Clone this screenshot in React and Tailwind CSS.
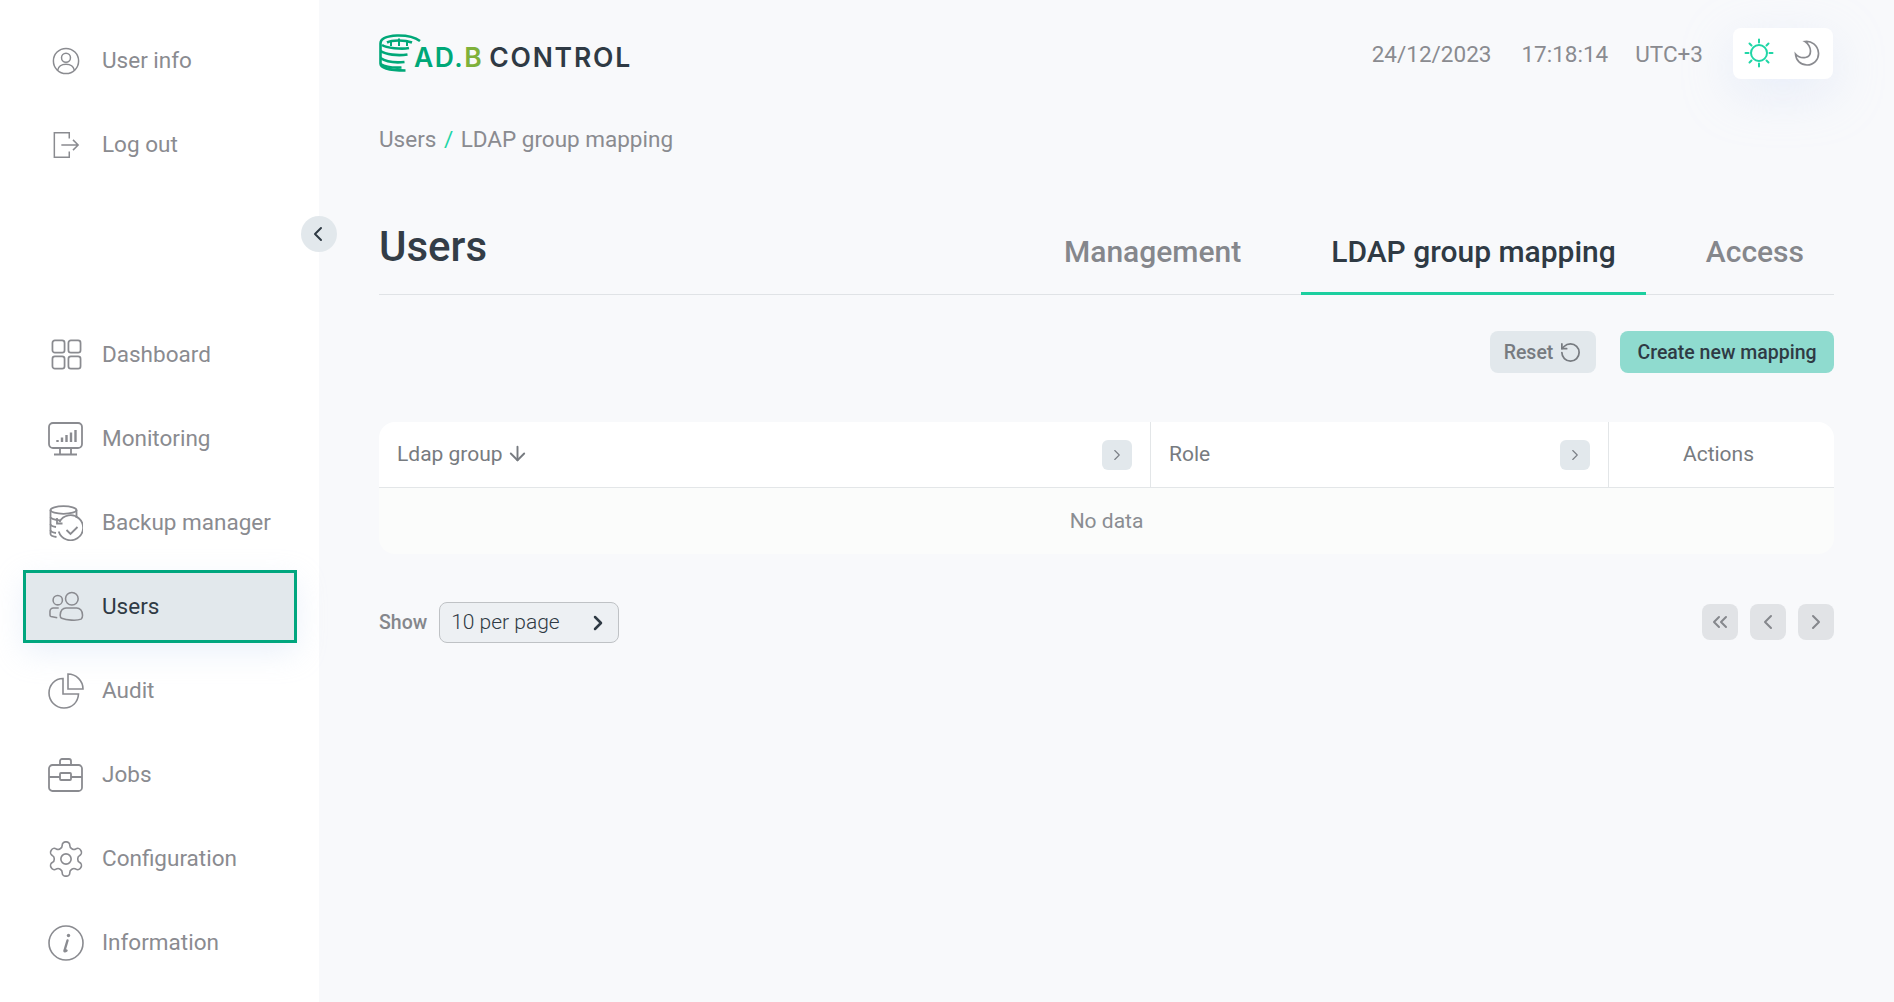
import React from 'react';
import { ChevronLeft, ChevronRight, ChevronsLeft, ArrowDown, RotateCcw } from 'lucide-react';

const IconUser = () => (
  <svg viewBox="0 0 30 30" className="w-[28px] h-[28px]" fill="none" stroke="currentColor" strokeWidth="1.600">
    <circle cx="15" cy="15" r="13.500" />
    <circle cx="15" cy="11.500" r="4.800" />
    <path d="M6 25c1-4.500 4.500-6.500 9-6.500s8 2 9 6.500" />
  </svg>
);

const IconLogout = () => (
  <svg viewBox="0 0 30 30" className="w-[28px] h-[28px]" fill="none" stroke="currentColor" strokeWidth="1.600">
    <path d="M18.500 8V2H2.500v26h16v-6" />
    <path d="M10 15h18M22.500 9.500 28 15l-5.500 5.500" />
  </svg>
);

const IconDashboard = () => (
  <svg viewBox="0 0 32 32" className="w-[31px] h-[31px]" fill="none" stroke="currentColor" strokeWidth="1.800">
    <rect x="1.500" y="1.500" width="12.500" height="12.500" rx="2.500" />
    <rect x="18" y="1.500" width="12.500" height="12.500" rx="2.500" />
    <rect x="1.500" y="18" width="12.500" height="12.500" rx="2.500" />
    <rect x="18" y="18" width="12.500" height="12.500" rx="2.500" />
  </svg>
);

const IconMonitor = () => (
  <svg viewBox="0 0 36 34" className="w-9 h-[34px]" fill="none" stroke="currentColor" strokeWidth="1.800">
    <rect x="1" y="1" width="33" height="25" rx="4" />
    <path d="M12 26v6M23 26v6M6 32.500h23" />
    <path d="M9.500 20v-2M14 20v-4.500M18.500 20v-7M23 20v-9.500M27.500 20V8" strokeWidth="2.400" />
  </svg>
);

const IconBackup = () => (
  <svg viewBox="0 0 34 36" className="w-[34px] h-9" fill="none" stroke="currentColor" strokeWidth="1.800">
    <ellipse cx="14.500" cy="5" rx="13" ry="3.800" />
    <path d="M1.500 5v24c0 1.500 2.500 2.500 6 3M27.500 5v8" />
    <path d="M1.500 12c0 1.500 4 3 10 3.500M1.500 19c0 1.500 2.500 2.500 5.500 3M1.500 25c0 1.500 2.500 2.500 5.500 3" />
    <path d="M10.500 17a12.500 12.500 0 1 1-.8 9.500" />
    <path d="M8 13v5.500h5.500" />
    <path d="m17.500 25 4 4 7-7" />
  </svg>
);

const IconUsers = () => (
  <svg viewBox="0 0 36 32" className="w-[35px] h-8" fill="none" stroke="currentColor" strokeWidth="1.600">
    <circle cx="9" cy="9" r="4.800" />
    <circle cx="23.500" cy="7.500" r="6.500" />
    <path d="M10 17H4.500C2.500 17 1 18.500 1 20.500v4c0 .5.500 1 1 1.200l6.500 1.300" />
    <path d="M13 27.500c-1.500-.5-1.500-1.500-1.500-3 0-5 3-7.500 6-7.500h11c3 0 6 2.500 6 7.500 0 2 0 3-1.500 4-5 2-15 1-20-1Z" />
  </svg>
);

const IconAudit = () => (
  <svg viewBox="0 0 36 36" className="w-9 h-9" fill="none" stroke="currentColor" strokeWidth="1.600">
    <path d="M15 5.500C7 5.500 1 12 1 20c0 8 6.500 15 15 15s14-6 14.500-14H15Z" />
    <path d="M20 1c8 0 15 6.500 15 15H20Z" />
  </svg>
);

const IconJobs = () => (
  <svg viewBox="0 0 36 34" className="w-9 h-[34px]" fill="none" stroke="currentColor" strokeWidth="1.800">
    <rect x="1" y="7" width="33" height="26" rx="3.500" />
    <path d="M12 7V3c0-1 1-2 2-2h7c1 0 2 1 2 2v4" />
    <path d="M1 19h11M23 19h11" />
    <rect x="12" y="15" width="11" height="7" rx="1" />
  </svg>
);

const IconGear = () => (
  <svg viewBox="1.500 1.500 21 21" className="w-9 h-9" fill="none" stroke="currentColor" strokeWidth="0.950" strokeLinejoin="round">
    <path d="M12.220 2h-.440a2 2 0 0 0-2 2v.180a2 2 0 0 1-1 1.730l-.430.250a2 2 0 0 1-2 0l-.150-.080a2 2 0 0 0-2.730.730l-.220.380a2 2 0 0 0 .730 2.730l.150.100a2 2 0 0 1 1 1.720v.510a2 2 0 0 1-1 1.740l-.150.090a2 2 0 0 0-.730 2.730l.220.380a2 2 0 0 0 2.730.730l.150-.080a2 2 0 0 1 2 0l.430.250a2 2 0 0 1 1 1.730V20a2 2 0 0 0 2 2h.440a2 2 0 0 0 2-2v-.180a2 2 0 0 1 1-1.730l.430-.250a2 2 0 0 1 2 0l.150.080a2 2 0 0 0 2.730-.730l.220-.390a2 2 0 0 0-.730-2.730l-.150-.080a2 2 0 0 1-1-1.740v-.500a2 2 0 0 1 1-1.740l.150-.090a2 2 0 0 0 .730-2.730l-.220-.380a2 2 0 0 0-2.730-.730l-.150.080a2 2 0 0 1-2 0l-.430-.250a2 2 0 0 1-1-1.730V4a2 2 0 0 0-2-2z" />
    <circle cx="12" cy="12" r="3" />
  </svg>
);

const IconInfo = () => (
  <svg viewBox="0 0 36 36" className="w-9 h-9" fill="none" stroke="currentColor" strokeWidth="1.600">
    <circle cx="18" cy="18" r="17" />
    <path d="M19.500 15.500 16.500 25.500c-.3 1 .5 1.300 2 0" strokeWidth="2.400" strokeLinecap="round" />
    <circle cx="20.500" cy="10.500" r="1.700" fill="currentColor" stroke="none" />
  </svg>
);

const IconSun = () => (
  <svg viewBox="0 0 30 30" className="w-[30px] h-[30px]" fill="none" stroke="#1fd6a6" strokeWidth="2" strokeLinecap="round">
    <circle cx="15" cy="15" r="8" />
    <path d="M15 1.500v3M15 25.500v3M1.500 15h3M25.500 15h3M5.500 5.500l2 2M22.500 22.500l2 2M5.500 24.500l2-2M22.500 7.500l2-2" />
  </svg>
);

const IconMoon = () => (
  <svg viewBox="0 0 26 26" className="w-[26px] h-[26px]" fill="none" stroke="#8a8b90" strokeWidth="1.700">
    <path d="M11 1.500c6-.8 13 3.500 13.500 11.500.4 7-5 12-11.500 12S2 20.500 1.500 14c3 3.500 7 4 10 3.500 3.500-.6 5-3.500 5-6.500S14.500 3.500 11 1.500Z" />
  </svg>
);

const logoText = "font-['Inter',sans-serif] font-semibold text-[26.500px] leading-[30px]";

const Logo = () => (
  <div className="flex items-end h-[38px] w-[254px]">
    <svg viewBox="0 0 42 38" className="w-[42px] h-[38px] shrink-0" fill="none" stroke="#00a878" strokeWidth="2.600">
      <path d="M41 7C35 2.500 26 1.300 18 1.500 8 2 1.500 4.500 1.500 9.500v20c0 4 9 7 25 7" />
      <path d="M8 8.500C13 6 25 5.500 33 8.500M3 11c4 3 20 4.500 27 3" />
      <path d="M1.500 17c5 3.500 17 5 27 3.500M1.500 24c5 3.500 14 5 24 4M1.500 30c5 3 13 4 21 3.500" />
      <path d="M12 6v6M20 4.500v7.500M28 6v6" strokeWidth="2" />
    </svg>
    <span className={`ml-[-7px] tracking-[1.500px] text-[#00a878] ${logoText}`}>AD.</span>
    <span className={`tracking-[1.500px] text-[#7fb13a] ${logoText}`}>B</span>
    <span className={`ml-[6px] tracking-[1.800px] text-[#2f3a44] ${logoText}`}>CONTROL</span>
  </div>
);

const NavItem = ({ icon: Icon, label, active }) => (
  <div className={`flex items-center h-[73px] w-[274px] pl-[22px] border-[3px] ${active ? 'border-[#00a67e] bg-[#e2e8ec] text-[#2f3a44] shadow-[0_10px_30px_rgba(190,210,240,0.3)]' : 'border-transparent text-[#8a8b90]'}`}>
    <span className="w-9 flex justify-center text-[#8a8b90] shrink-0"><Icon /></span>
    <span className="ml-[18px] text-[22.500px] leading-none">{label}</span>
  </div>
);

const SmallBtn = ({ children }) => (
  <button className="w-[30px] h-[30px] rounded-md bg-[#e2e8ec] text-[#7a7f86] flex items-center justify-center">{children}</button>
);

const PageBtn = ({ children }) => (
  <button className="w-9 h-9 rounded-lg bg-[#e1e3e6] text-[#85878c] flex items-center justify-center">{children}</button>
);

const App = () => (
  <div className="flex h-screen w-full bg-[#f8f9fb] font-['Roboto',sans-serif] overflow-hidden">
    <aside className="relative w-[319px] shrink-0 bg-white pl-[23px] pt-6">
      <div className="flex flex-col gap-[11px]">
        <NavItem icon={IconUser} label="User info" />
        <NavItem icon={IconLogout} label="Log out" />
      </div>
      <button className="absolute left-[301px] top-[216px] w-9 h-9 rounded-full bg-[#e2e8ec] text-[#2f3a44] flex items-center justify-center">
        <ChevronLeft size={24} strokeWidth={2} className="mr-[2px]" />
      </button>
      <div className="flex flex-col gap-[11px] mt-[137px]">
        <NavItem icon={IconDashboard} label="Dashboard" />
        <NavItem icon={IconMonitor} label="Monitoring" />
        <NavItem icon={IconBackup} label="Backup manager" />
        <NavItem icon={IconUsers} label="Users" active />
        <NavItem icon={IconAudit} label="Audit" />
        <NavItem icon={IconJobs} label="Jobs" />
        <NavItem icon={IconGear} label="Configuration" />
        <NavItem icon={IconInfo} label="Information" />
      </div>
    </aside>

    <main className="flex-1 pl-[60px] pr-[60px] min-w-0">
      <header className="flex items-center justify-between h-[107px] pb-[1px]">
        <Logo />
        <div className="flex items-center text-[22.500px] text-[#8a8b90] mr-[1px]">
          <div className="flex pt-[3px]">
            <span>24/12/2023</span>
            <span className="ml-[30px]">17:18:14</span>
            <span className="ml-[27px]">UTC+3</span>
          </div>
          <div className="ml-[30px] w-[100px] h-[51px] rounded-lg bg-white flex items-center justify-center gap-5 pr-[2px] shadow-[0_14px_50px_rgba(200,215,245,0.35)]">
            <IconSun />
            <IconMoon />
          </div>
        </div>
      </header>

      <div className="flex items-center text-[22.500px] leading-[26px] text-[#8a8b90] mt-[19px]">
        <span>Users</span>
        <span className="mx-[7.500px] text-[#1fd6a6]">/</span>
        <span>LDAP group mapping</span>
      </div>

      <div className="flex items-end justify-between border-b border-[#e0e3e6] h-[115px] mt-[28px]">
        <h1 className="text-[42px] leading-[52px] font-medium text-[#333d47] mb-[21px]">Users</h1>
        <nav className="flex gap-[30px] text-[30px] font-medium text-[#85878c]">
          <span className="px-[30px] h-[84px] flex items-center border-b-[3px] border-transparent mb-[-1px]">Management</span>
          <span className="px-[30px] h-[84px] flex items-center text-[#2f3a44] border-b-[3px] border-[#1ccf9f] mb-[-1px]">LDAP group mapping</span>
          <span className="px-[30px] h-[84px] flex items-center border-b-[3px] border-transparent mb-[-1px]">Access</span>
        </nav>
      </div>

      <div className="flex justify-end gap-6 mt-[36px]">
        <button className="h-[42px] w-[106px] rounded-lg bg-[#e2e8ec] text-[#777b80] text-[19.500px] font-medium flex items-center justify-center gap-[6px] pt-[1px]">
          Reset <RotateCcw size={23} strokeWidth={1.800} />
        </button>
        <button className="h-[42px] w-[214px] rounded-lg bg-[#8fdbcf] text-[#2f3a44] text-[19.500px] font-medium pt-[1px]">Create new mapping</button>
      </div>

      <div className="mt-[49px] rounded-2xl overflow-hidden">
        <div className="flex h-[66px] bg-white border-b border-[#e3e6e8] text-[21px] text-[#777b80]">
          <div className="w-[772px] flex items-center justify-between px-[18px] border-r border-[#e3e6e8]">
            <span className="flex items-center gap-[3px] pt-[1px]">Ldap group <ArrowDown size={23} strokeWidth={2} className="mb-[3px]" /></span>
            <SmallBtn><ChevronRight size={18} strokeWidth={1.500} /></SmallBtn>
          </div>
          <div className="w-[458px] flex items-center justify-between px-[18px] border-r border-[#e3e6e8]">
            <span className="pt-[1px]">Role</span>
            <SmallBtn><ChevronRight size={18} strokeWidth={1.500} /></SmallBtn>
          </div>
          <div className="flex-1 flex items-center justify-center pr-[6px] pt-[1px]">Actions</div>
        </div>
        <div className="h-[66px] bg-[#fbfcfb] flex items-center justify-center text-[21px] text-[#8a8d92] pt-[1px]">No data</div>
      </div>

      <div className="flex items-center justify-between mt-[48px]">
        <div className="flex items-center">
          <span className="text-[19.500px] font-medium text-[#85878c]">Show</span>
          <div className="ml-[12px] w-[180px] h-[41px] rounded-lg border border-[#bfc2c5] bg-[#edf0f3] flex items-center justify-between pl-[11px] pr-[8px] text-[21px] font-light text-[#2f3a44]">
            10 per page <ChevronRight size={24} strokeWidth={2.500} className="text-[#2f3a44]" />
          </div>
        </div>
        <div className="flex gap-3 mb-[2px]">
          <PageBtn><ChevronsLeft size={24} strokeWidth={2} /></PageBtn>
          <PageBtn><ChevronLeft size={24} strokeWidth={2} /></PageBtn>
          <PageBtn><ChevronRight size={24} strokeWidth={2} /></PageBtn>
        </div>
      </div>
    </main>
  </div>
);

export default App;
